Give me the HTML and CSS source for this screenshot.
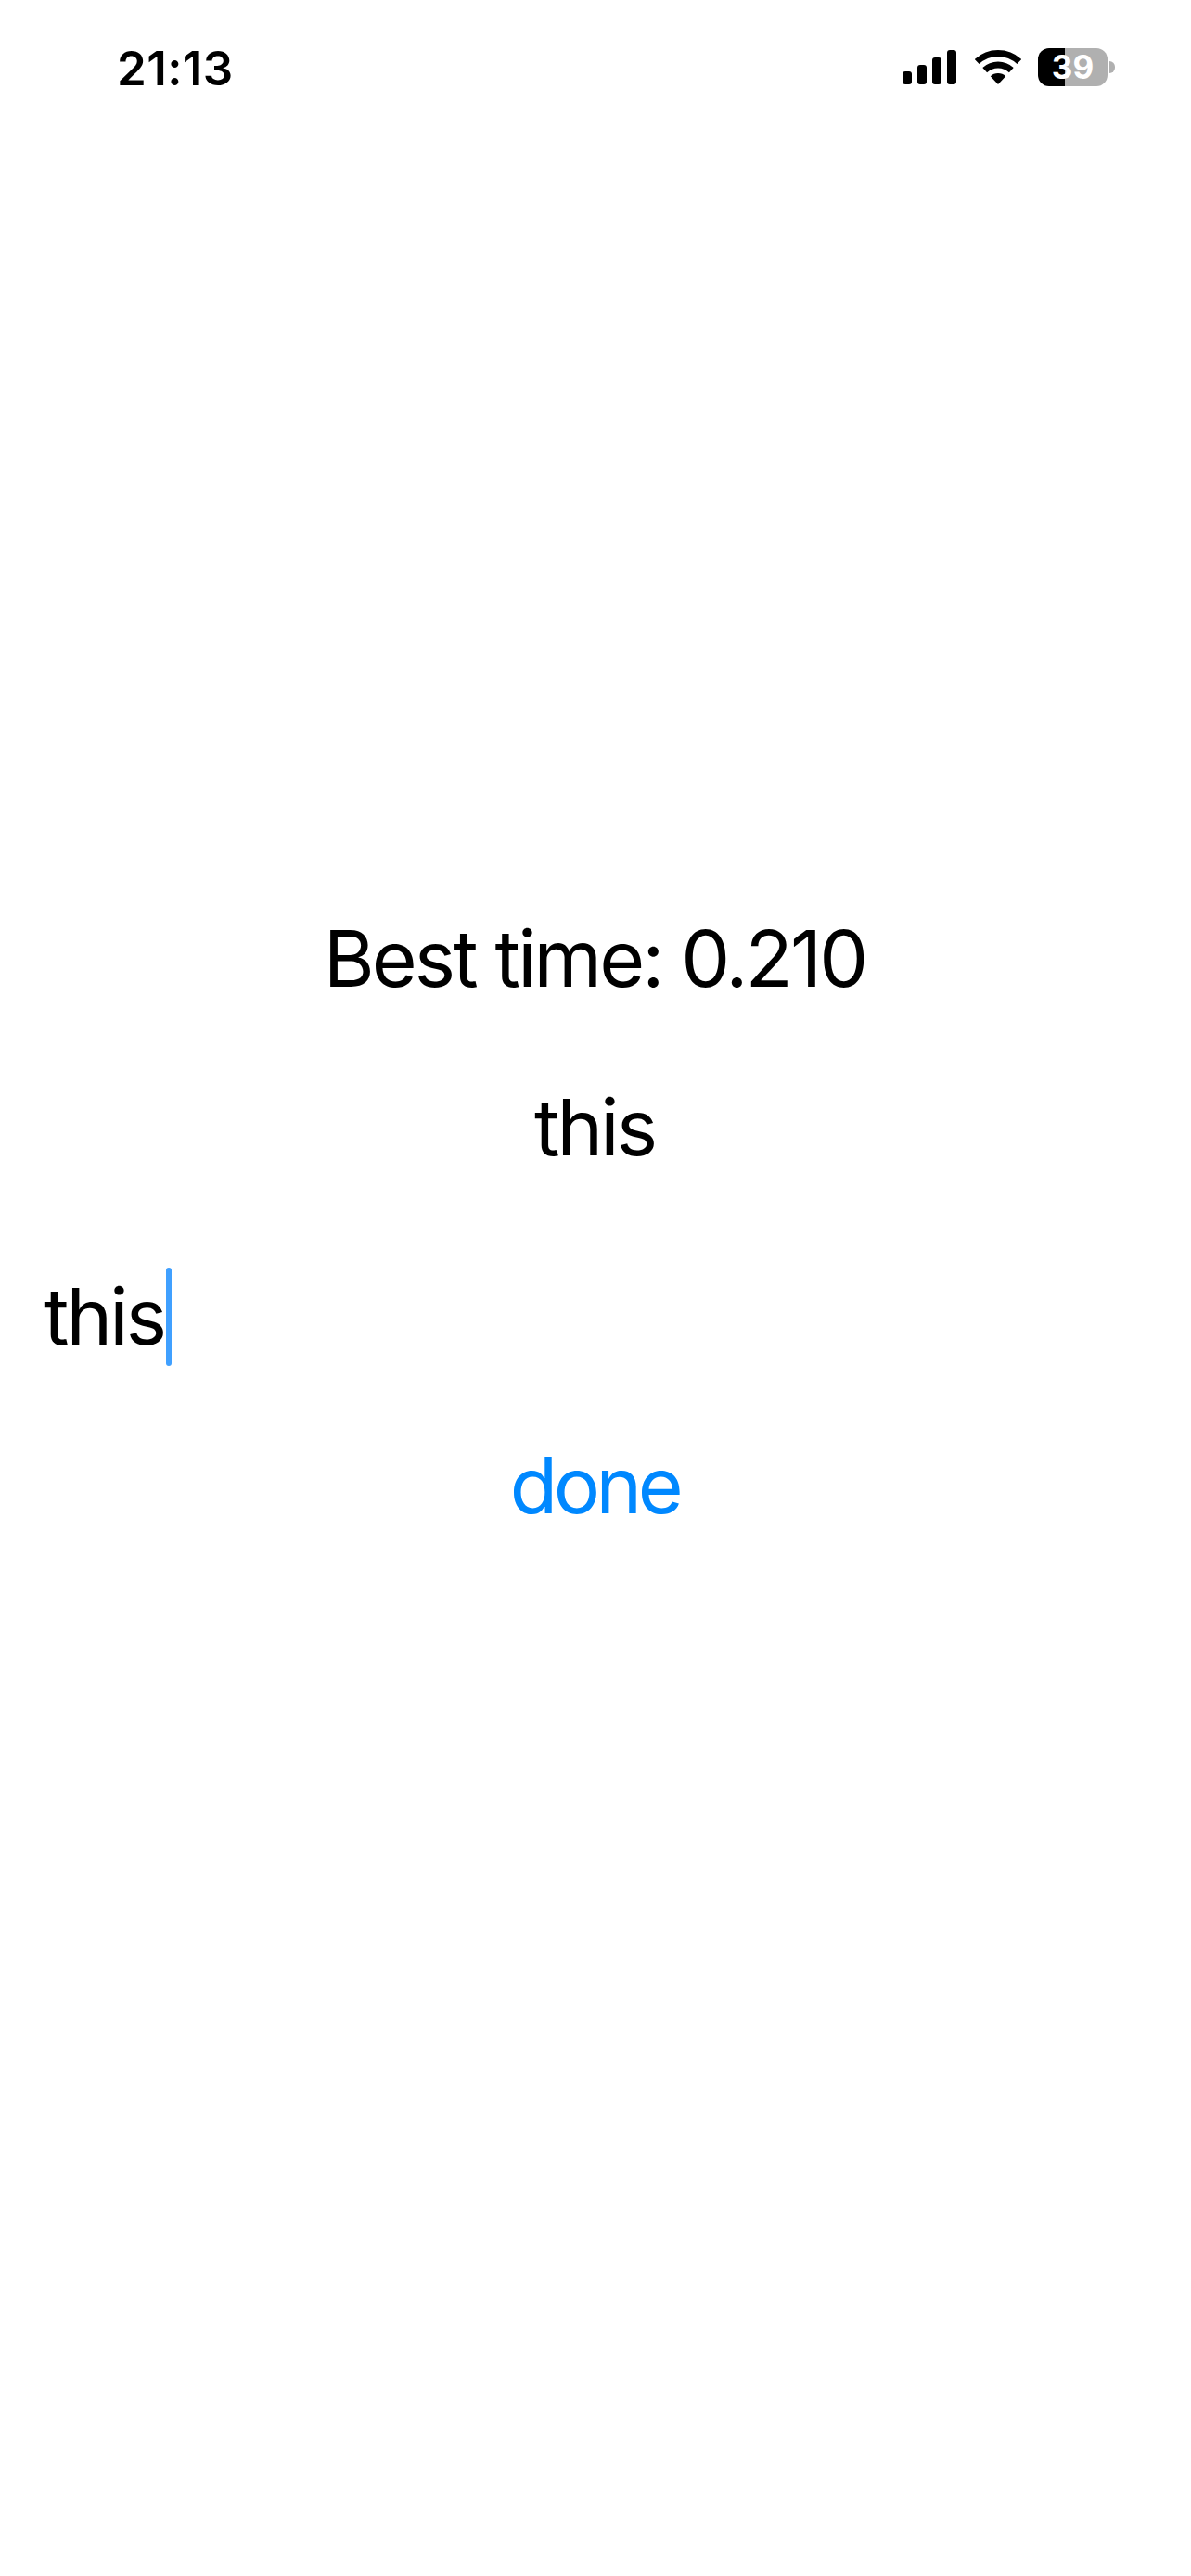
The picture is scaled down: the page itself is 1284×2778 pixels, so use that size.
FILE: index.html
```html
<!DOCTYPE html>
<html lang="en">
<head>
  <meta charset="UTF-8">
  <meta name="viewport" content="width=device-width, initial-scale=1.0">
  <title>Typing game</title>
  <link rel="stylesheet" href="styles.css">
</head>
<body>
  <div class="status-bar">
    <span class="clock">21:13</span>
    <div class="status-icons">
      <div class="signal">
        <span class="bar bar-1"></span>
        <span class="bar bar-2"></span>
        <span class="bar bar-3"></span>
        <span class="bar bar-4"></span>
      </div>
      <svg class="wifi" width="50" height="37" viewBox="0 0 50 37">
        <path d="M2.2 12.5A33.5 33.5 0 0 1 47.8 12.5" fill="none" stroke="#000" stroke-width="7"/>
        <path d="M10.7 21.6A21 21 0 0 1 39.3 21.6" fill="none" stroke="#000" stroke-width="7"/>
        <path d="M25 37L16.8 28.2A12 12 0 0 1 33.2 28.2Z" fill="#000"/>
      </svg>
      <div class="battery">
        <div class="battery-body">39</div>
        <span class="battery-cap"></span>
      </div>
    </div>
  </div>

  <main class="game">
    <p class="line">Best time: 0.210</p>
    <p class="line word">this</p>
    <div class="input-row">
      <span class="line typed">this</span><span class="caret"></span>
    </div>
    <button class="done">done</button>
  </main>
</body>
</html>
```

FILE: styles.css
```css
body {
  margin: 0;
  height: 2778px;
  background-color: #ffffff;
  color: #000000;
  font-family: Inter, "Liberation Sans", sans-serif;
  overflow: hidden;
}

.status-bar {
  height: 140px;
  padding: 52px 82px 0 126px;
  box-sizing: border-box;
  display: flex;
  justify-content: space-between;
  align-items: flex-start;
}
.clock {
  font-size: 51px;
  font-weight: 600;
  line-height: 44px;
  letter-spacing: 0.4px;
}
.status-icons {
  display: flex;
  align-items: flex-end;
}

.signal {
  display: flex;
  align-items: flex-end;
  gap: 6px;
  margin: 0 20px 2px 0;
}
.bar {
  width: 10px;
  background-color: #000;
  border-radius: 3px;
}
.bar-1 { height: 14px; }
.bar-2 { height: 21px; }
.bar-3 { height: 29px; }
.bar-4 { height: 37px; }

.wifi {
  margin: 0 18px 2px 0;
}

.battery {
  display: flex;
  align-items: center;
}
.battery-body {
  width: 75px;
  height: 41px;
  border-radius: 12px;
  background: linear-gradient(to right, #000 29px, #b0b0b0 29px);
  color: #fff;
  font-size: 35px;
  font-weight: 700;
  line-height: 41px;
  text-align: center;
}
.battery-cap {
  width: 6px;
  height: 13px;
  margin-left: 2px;
  background-color: #b0b0b0;
  border-radius: 0 6px 6px 0;
}

.game {
  display: flex;
  flex-direction: column;
  align-items: center;
  padding-top: 834px;
  padding-right: 2px;
}
.line {
  margin: 0;
  font-size: 84px;
  line-height: 120px;
  letter-spacing: -2.9px;
}
.word {
  margin-top: 62px;
}
.input-row {
  align-self: stretch;
  display: flex;
  align-items: center;
  margin-top: 84px;
  padding-left: 47px;
}
.caret {
  flex-shrink: 0;
  width: 6px;
  height: 106px;
  margin-left: 2px;
  background-color: #40a0ff;
  border-radius: 3px;
}
.done {
  margin-top: 62px;
  padding: 0;
  border: none;
  background: none;
  color: #0088ff;
  font-family: inherit;
  font-size: 84px;
  line-height: 120px;
  letter-spacing: -4.5px;
  cursor: pointer;
}
```
